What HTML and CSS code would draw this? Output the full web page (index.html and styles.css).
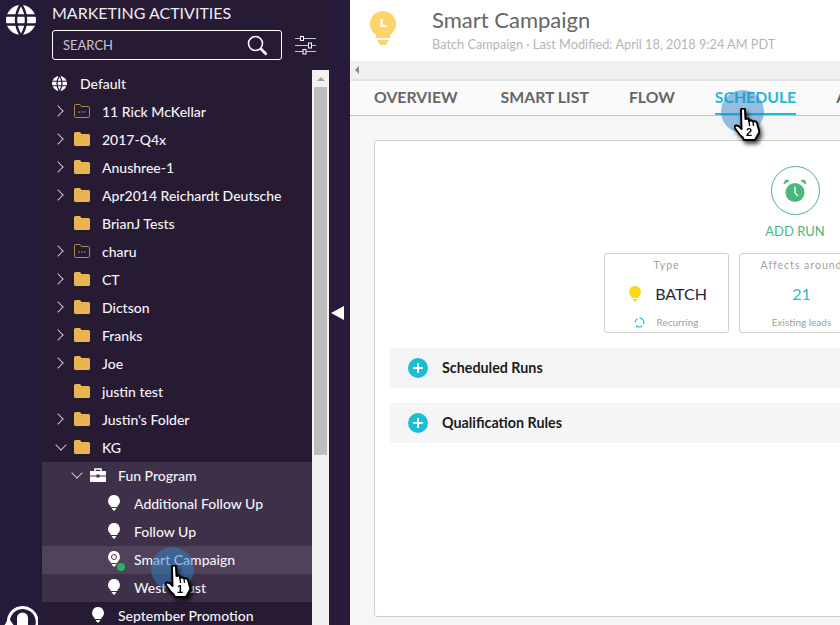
FILE: index.html
```html
<!DOCTYPE html>
<html lang="en">
<head>
    <meta charset="UTF-8">
    <title>Smart Campaign</title>
    <link rel="stylesheet" href="styles.css">
</head>
<body>
    <svg class="defs" width="0" height="0">
        <defs>
            <symbol id="folder" viewBox="0 0 16 14"><path d="M0 1.500Q0 0 1.500 0H6L7.500 2H14.500Q16 2 16 3.500V12.500Q16 14 14.500 14H1.500Q0 14 0 12.500Z" fill="#e8b650"/></symbol>
            <symbol id="folder-open" viewBox="0 0 16 14"><path d="M.5 1.500Q.5 .5 1.500 .5H6L7.500 2.500H14.500Q15.500 2.500 15.500 3.500V12.500Q15.500 13.500 14.500 13.500H1.500Q.5 13.500 .5 12.500Z" fill="none" stroke="#b08a4a"/><path d="M4.500 8h1.500M7.200 8h1.500M10 8h1.500" stroke="#c9a25a" stroke-width="1.200"/></symbol>
            <symbol id="bulb" viewBox="0 0 12 16"><path d="M6 0A6 6 0 0 1 9.500 10.800V12H2.500V10.800A6 6 0 0 1 6 0Z" fill="#fff"/><path d="M3.500 13H8.500L6.800 15.600H5.200Z" fill="#fff"/></symbol>
            <symbol id="globe" viewBox="0 0 30 30"><circle cx="15" cy="15" r="15" fill="#fff"/><g fill="none" stroke="#241a3a" stroke-width="2.400"><path d="M0 10.500H30M0 19.500H30"/><path d="M15 -1Q5 15 15 31Q25 15 15 -1"/></g></symbol>
            <symbol id="plus" viewBox="0 0 20 20"><circle cx="10" cy="10" r="10" fill="#1cbcd8"/><path d="M10 5V15M5 10H15" stroke="#fff" stroke-width="2"/></symbol>
            <symbol id="hand" viewBox="0 0 26 33"><path d="M7 2Q7 .5 9 .5T11 2L11.500 11Q14 10 15 11.500L15 13Q17.500 11.500 19 13.500Q22 12.500 23 15L25.500 24L21 32H10Q9 29 6 27L.8 20Q.2 17.500 2.500 17.500Q5 17.500 7.500 21Z" fill="#fff" stroke="#000" stroke-width="2" stroke-linejoin="round"/><path d="M15 13L15.500 18M19 13.500L19.500 18" stroke="#000" stroke-width="1.300" fill="none"/></symbol>
        </defs>
    </svg>

    <nav class="rail">
        <svg class="rail-globe"><use href="#globe"/></svg>
        <svg class="rail-bell" viewBox="0 0 34 34">
            <path d="M4.500 19A14.500 14.500 0 1 1 20 30.500" fill="none" stroke="#fff" stroke-width="3"/>
            <path d="M13 30V12A5.500 5.500 0 0 1 24 12V30Z" fill="#fff"/>
            <path d="M.5 19L5 12.500L9.500 19Z" fill="#fff"/>
        </svg>
    </nav>

    <aside class="panel">
        <div class="panel-head">
            <div class="panel-title">MARKETING ACTIVITIES</div>
            <div class="search-row">
                <div class="search-box">
                    <span>SEARCH</span>
                    <svg width="21" height="21" viewBox="0 0 21 21"><circle cx="8.500" cy="8.500" r="7" fill="none" stroke="#fff" stroke-width="1.600"/><path d="M13.500 13.500L19.500 19.500" stroke="#fff" stroke-width="2.600"/></svg>
                </div>
                <svg class="filter-icon" width="21" height="20" viewBox="0 0 21 20">
                    <g fill="none" stroke="#fff"><path d="M0 3.500H21M0 10.500H21M0 16.500H21" stroke="#c9c5cf"/><rect x="5.500" y="1.500" width="3" height="4" fill="#271a33"/><rect x="13.500" y="8" width="3" height="5" fill="#271a33"/><rect x="8" y="14.500" width="3" height="4.500" fill="#271a33"/></g>
                </svg>
            </div>
        </div>
        <div class="tree-wrap">
            <ul class="tree">
                <li class="row lvl0"><span class="ico"><svg width="15" height="15"><use href="#globe"/></svg></span>Default</li>
                <li class="row lvl1"><span class="chev"></span><span class="ico"><svg width="16" height="14"><use href="#folder-open"/></svg></span>11 Rick McKellar</li>
                <li class="row lvl1"><span class="chev"></span><span class="ico"><svg width="16" height="14"><use href="#folder"/></svg></span>2017-Q4x</li>
                <li class="row lvl1"><span class="chev"></span><span class="ico"><svg width="16" height="14"><use href="#folder"/></svg></span>Anushree-1</li>
                <li class="row lvl1"><span class="chev"></span><span class="ico"><svg width="16" height="14"><use href="#folder"/></svg></span>Apr2014 Reichardt Deutsche</li>
                <li class="row lvl1"><span class="nochev"></span><span class="ico"><svg width="16" height="14"><use href="#folder"/></svg></span>BrianJ Tests</li>
                <li class="row lvl1"><span class="chev"></span><span class="ico"><svg width="16" height="14"><use href="#folder-open"/></svg></span>charu</li>
                <li class="row lvl1"><span class="chev"></span><span class="ico"><svg width="16" height="14"><use href="#folder"/></svg></span>CT</li>
                <li class="row lvl1"><span class="chev"></span><span class="ico"><svg width="16" height="14"><use href="#folder"/></svg></span>Dictson</li>
                <li class="row lvl1"><span class="chev"></span><span class="ico"><svg width="16" height="14"><use href="#folder"/></svg></span>Franks</li>
                <li class="row lvl1"><span class="chev"></span><span class="ico"><svg width="16" height="14"><use href="#folder"/></svg></span>Joe</li>
                <li class="row lvl1"><span class="nochev"></span><span class="ico"><svg width="16" height="14"><use href="#folder"/></svg></span>justin test</li>
                <li class="row lvl1"><span class="chev"></span><span class="ico"><svg width="16" height="14"><use href="#folder"/></svg></span>Justin's Folder</li>
                <li class="row lvl1"><span class="chev open"></span><span class="ico"><svg width="16" height="14"><use href="#folder"/></svg></span>KG</li>
                <li class="group">
                    <ul>
                        <li class="row lvl2"><span class="chev open"></span><span class="ico"><svg width="16" height="14" viewBox="0 0 16 14"><path d="M5 3V1H11V3" fill="none" stroke="#fff" stroke-width="1.500"/><path d="M0 3H16V7.500H9.500V6.500H6.500V7.500H0ZM0 8.500H6.500V9.500H9.500V8.500H16V14H0Z" fill="#fff"/></svg></span>Fun Program</li>
                        <li class="row lvl3"><span class="ico"><svg class="bulb" width="12" height="16"><use href="#bulb"/></svg></span>Additional Follow Up</li>
                        <li class="row lvl3"><span class="ico"><svg class="bulb" width="12" height="16"><use href="#bulb"/></svg></span>Follow Up</li>
                        <li class="row lvl3 selected"><span class="ico"><svg class="bulb" width="12" height="16"><use href="#bulb"/></svg><i class="gear"></i><i class="dot"></i></span>Smart Campaign</li>
                        <li class="row lvl3"><span class="ico"><svg class="bulb" width="12" height="16"><use href="#bulb"/></svg></span>West Coust</li>
                    </ul>
                </li>
                <li class="row lvl2"><span class="nochev"></span><span class="ico"><svg class="bulb" width="12" height="16"><use href="#bulb"/></svg></span>September Promotion</li>
            </ul>
            <div class="scrollbar">
                <div class="scroll-up"></div>
                <div class="scroll-thumb"></div>
            </div>
        </div>
        <div class="click click-one"></div>
        <div class="pointer pointer-one"><svg width="26" height="33"><use href="#hand"/></svg><b>1</b></div>
    </aside>

    <div class="splitter"><span class="collapse"></span></div>

    <main class="main">
        <header class="page-head">
            <svg class="head-bulb" width="26" height="34" viewBox="0 0 26 34">
                <path d="M13 0A13 13 0 0 1 20 24V27H6V24A13 13 0 0 1 13 0Z" fill="#fdd36e"/>
                <path d="M7 29H19L16 34H10Z" fill="#fdd36e"/>
                <path d="M11.500 8V15H17" fill="none" stroke="#fff" stroke-width="2.200"/>
            </svg>
            <div>
                <h1>Smart Campaign</h1>
                <p>Batch Campaign · Last Modified: April 18, 2018 9:24 AM PDT</p>
            </div>
        </header>
        <div class="scroll-strip"><span class="strip-arrow"></span></div>
        <div class="tabs">
            <span class="tab">OVERVIEW</span>
            <span class="tab">SMART LIST</span>
            <span class="tab">FLOW</span>
            <span class="tab active">SCHEDULE</span>
            <span class="tab">ACTIONS</span>
        </div>
        <div class="content">
            <div class="card">
                <div class="add-run">
                    <span class="add-circle">
                        <svg width="24" height="24" viewBox="0 0 24 24">
                            <circle cx="12" cy="13.500" r="9.500" fill="#4db67b"/>
                            <path d="M1 5L6 1.500L2.500 1.200ZM23 5L18 1.500L21.500 1.200Z" fill="#4db67b" stroke="#4db67b"/>
                            <path d="M12 7.500V14L15 17" fill="none" stroke="#fff" stroke-width="1.300"/>
                        </svg>
                    </span>
                    <span class="add-label">ADD RUN</span>
                </div>
                <div class="stats">
                    <div class="stat">
                        <div class="stat-title">Type</div>
                        <div class="stat-main">
                            <svg width="12" height="16" viewBox="0 0 12 16"><path d="M6 0A6 6 0 0 1 9.500 10.800V12H2.500V10.800A6 6 0 0 1 6 0Z" fill="#fbd914"/><path d="M3.500 13H8.500L6.800 15.600H5.200Z" fill="#fbd914"/></svg>
                            <span>BATCH</span>
                        </div>
                        <div class="stat-foot">
                            <svg width="11" height="11" viewBox="0 0 11 11"><path d="M5.500 1.200A4.300 4.300 0 0 1 9.600 7M8 9A4.300 4.300 0 0 1 2 8.500M1.200 5.500A4.300 4.300 0 0 1 3.500 1.700" fill="none" stroke="#1cbcd8" stroke-width="1.200"/></svg>
                            Recurring
                        </div>
                    </div>
                    <div class="stat">
                        <div class="stat-title">Affects around</div>
                        <div class="stat-main num">21</div>
                        <div class="stat-foot">Existing leads</div>
                    </div>
                </div>
                <div class="section"><svg width="20" height="20"><use href="#plus"/></svg>Scheduled Runs</div>
                <div class="section"><svg width="20" height="20"><use href="#plus"/></svg>Qualification Rules</div>
            </div>
        </div>
        <div class="click click-two"></div>
        <div class="pointer pointer-two"><svg width="26" height="33"><use href="#hand"/></svg><b>2</b></div>
    </main>
</body>
</html>
```
FILE: styles.css
```css
* {
    box-sizing: border-box;
}
html, body {
    height: 100%;
}
body {
    margin: 0;
    display: flex;
    height: 625px;
    overflow: hidden;
    font-family: Lato, "Liberation Sans", sans-serif;
    background-color: #fff;
}
ul {
    list-style: none;
    margin: 0;
    padding: 0;
}
.defs {
    position: absolute;
}

/* far left rail */
.rail {
    width: 42px;
    flex: none;
    background-color: #241a3a;
    display: flex;
    flex-direction: column;
    justify-content: space-between;
    align-items: center;
    padding-top: 5px;
    overflow: hidden;
}
.rail-globe {
    width: 30px;
    height: 30px;
}
.rail-bell {
    width: 34px;
    height: 34px;
    margin-bottom: -15px;
}

/* tree panel */
.panel {
    position: relative;
    width: 287px;
    flex: none;
    display: flex;
    flex-direction: column;
    background-color: #271a33;
    color: #f4f2f6;
}
.panel-head {
    height: 70px;
    flex: none;
    padding: 4px 13px 0 10px;
}
.panel-title {
    font-size: 16px;
    line-height: 18px;
    color: #eeeaf2;
}
.search-row {
    display: flex;
    align-items: center;
    justify-content: space-between;
    margin-top: 8px;
}
.search-box {
    width: 230px;
    height: 30px;
    border: 1px solid #fff;
    border-radius: 3px;
    display: flex;
    align-items: center;
    justify-content: space-between;
    padding: 0 13px 0 10px;
    font-size: 13px;
    color: #c8c4ce;
}
.tree-wrap {
    flex: 1;
    display: flex;
    min-height: 0;
    overflow: hidden;
}
.tree {
    flex: 1;
    min-width: 0;
}
.row {
    height: 28px;
    display: flex;
    align-items: center;
    padding-bottom: 2px;
    font-size: 14px;
    font-weight: 500;
    white-space: nowrap;
}
.lvl0 {
    padding-left: 10px;
}
.lvl1 {
    padding-left: 15px;
}
.lvl2 {
    padding-left: 31px;
}
.lvl3 {
    padding-left: 64px;
}
.chev, .nochev {
    width: 17px;
    height: 14px;
    flex: none;
    position: relative;
}
.chev::before {
    content: "";
    position: absolute;
    left: -3px;
    top: 3px;
    width: 7px;
    height: 7px;
    border-top: 1px solid #c4c0ca;
    border-right: 1px solid #c4c0ca;
    transform: rotate(45deg);
}
.chev.open::before {
    left: 0;
    top: 1px;
    transform: rotate(135deg);
}
.ico {
    position: relative;
    width: 28px;
    flex: none;
    display: flex;
    align-items: center;
}
.bulb {
    margin-left: 2px;
}
.gear {
    position: absolute;
    left: 5px;
    top: 3px;
    width: 6px;
    height: 6px;
    border: 1px solid #4a3d58;
    border-radius: 50%;
}
.dot {
    position: absolute;
    left: 11px;
    top: 12px;
    width: 8px;
    height: 8px;
    background-color: #2fae62;
    border-radius: 50%;
}
.group {
    background-color: #3e3049;
}
.selected {
    background-color: #50425b;
}
.scrollbar {
    width: 17px;
    flex: none;
    background-color: #f1f1f1;
    padding: 0 2px;
    position: relative;
}
.scroll-up {
    height: 17px;
    position: relative;
}
.scroll-up::before {
    content: "";
    position: absolute;
    left: 2.500px;
    top: 7px;
    border-left: 4px solid transparent;
    border-right: 4px solid transparent;
    border-bottom: 4px solid #a3a3a3;
}
.scroll-thumb {
    height: 368px;
    background-color: #bdbdbd;
}

/* splitter */
.splitter {
    width: 21px;
    flex: none;
    background-color: #271a3a;
    display: flex;
    align-items: center;
    justify-content: center;
}
.collapse {
    border-top: 7px solid transparent;
    border-bottom: 7px solid transparent;
    border-right: 13px solid #fff;
    margin-left: -4px;
}

/* main area */
.main {
    flex: 1;
    min-width: 0;
    position: relative;
    display: flex;
    flex-direction: column;
    overflow: hidden;
}
.page-head {
    height: 61px;
    flex: none;
    display: flex;
    align-items: flex-start;
    padding: 11px 0 0 20px;
    gap: 36px;
}
.page-head h1 {
    margin: -4px 0 0;
    font-size: 22px;
    line-height: 26px;
    font-weight: 400;
    color: #666;
}
.page-head p {
    margin: 3px 0 0;
    font-size: 12.750px;
    line-height: 16px;
    color: #b5b5b5;
}
.scroll-strip {
    height: 18px;
    flex: none;
    background-color: #f0f0f0;
    padding: 5px 0 0 5px;
}
.strip-arrow {
    display: block;
    width: 0;
    border-top: 4px solid transparent;
    border-bottom: 4px solid transparent;
    border-right: 4px solid #888;
}
.tabs {
    height: 37px;
    flex: none;
    display: flex;
    gap: 40px;
    padding-left: 24px;
    background-color: #fafafa;
    border-top: 2px solid #e4e4e4;
    border-bottom: 1px solid #c4c4c4;
    white-space: nowrap;
}
.tab {
    font-size: 15.800px;
    font-weight: 700;
    line-height: 31px;
    height: 34px;
    color: #666;
}
.tab:first-child {
    margin-right: 3px;
}
.tab.active {
    color: #1cbcd8;
    border-bottom: 2px solid #1cbcd8;
}
.content {
    flex: 1;
    background-color: #f6f6f6;
    padding: 24px 0 0 24px;
}
.card {
    width: 842px;
    height: 477px;
    background-color: #fff;
    border: 1px solid #cfcfcf;
    border-radius: 3px;
    padding: 25px 15px 0;
}
.add-run {
    display: flex;
    flex-direction: column;
    align-items: center;
}
.add-circle {
    width: 49px;
    height: 49px;
    border: 1px solid #4db67b;
    border-radius: 50%;
    display: flex;
    align-items: center;
    justify-content: center;
}
.add-label {
    margin-top: 8px;
    font-size: 13px;
    line-height: 17px;
    color: #4db67b;
}
.stats {
    display: flex;
    gap: 10px;
    margin: 13px 0 15px 214px;
}
.stat {
    width: 125px;
    height: 80px;
    border: 1px solid #cfcfcf;
    border-radius: 3px;
    display: flex;
    flex-direction: column;
    align-items: center;
    padding-top: 5px;
    color: #a0a0a0;
}
.stat-title {
    font-size: 10.500px;
    line-height: 13px;
    letter-spacing: 1px;
}
.stat-main {
    height: 35px;
    margin-top: 4px;
    margin-left: 3px;
    display: flex;
    align-items: center;
    gap: 14px;
    font-size: 16px;
    color: #2b2440;
}
.stat-main.num {
    margin-left: 0;
    color: #1cbcd8;
}
.stat-foot {
    display: flex;
    align-items: center;
    gap: 11px;
    margin-top: 4px;
    font-size: 10px;
    line-height: 14px;
}
.section {
    height: 40px;
    margin-bottom: 15px;
    background-color: #f5f5f5;
    border-radius: 3px;
    display: flex;
    align-items: center;
    gap: 14px;
    padding: 0 0 1px 18px;
    font-size: 14.300px;
    font-weight: 700;
    color: #1c1c1c;
}

/* click markers over the page */
.click {
    position: absolute;
    width: 43px;
    height: 43px;
    border-radius: 50%;
    background-color: rgba(45, 130, 200, 0.5);
}
.click-one {
    left: 109px;
    top: 547px;
}
.click-two {
    left: 371px;
    top: 90px;
}
.pointer {
    position: absolute;
    width: 26px;
    height: 33px;
    filter: drop-shadow(2px 3px 2px rgba(0, 0, 0, 0.75));
}
.pointer svg {
    display: block;
}
.pointer b {
    position: absolute;
    left: 12px;
    top: 18px;
    font-size: 11px;
    line-height: 12px;
    font-family: "Liberation Sans", sans-serif;
    color: #000;
}
.pointer-one {
    left: 123px;
    top: 565px;
}
.pointer-two {
    left: 384px;
    top: 108px;
}
```
